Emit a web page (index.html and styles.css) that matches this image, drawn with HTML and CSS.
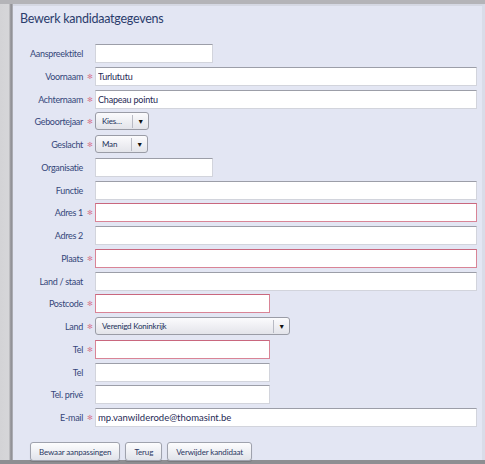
FILE: index.html
```html
<!DOCTYPE html>
<html>
<head>
<meta charset="utf-8">
<link rel="stylesheet" href="styles.css">
</head>
<body>
<div class="frame">
  <div class="side"></div>
  <div class="panel">
    <h1 class="title">Bewerk kandidaatgegevens</h1>
    <form class="form">
      <label class="lbl">Aanspreektitel</label><span class="star"></span><div class="field"><input class="inp w-s" type="text"></div>
      <label class="lbl">Voornaam</label><span class="star">✻</span><div class="field"><input class="inp w-l" type="text" value="Turlututu"></div>
      <label class="lbl">Achternaam</label><span class="star">✻</span><div class="field"><input class="inp w-l" type="text" value="Chapeau pointu"></div>
      <label class="lbl">Geboortejaar</label><span class="star">✻</span><div class="field"><div class="sel w-y"><span class="sel-txt">Kies…</span><span class="sel-btn">▼</span></div></div>
      <label class="lbl">Geslacht</label><span class="star">✻</span><div class="field"><div class="sel w-g"><span class="sel-txt">Man</span><span class="sel-btn">▼</span></div></div>
      <label class="lbl">Organisatie</label><span class="star"></span><div class="field"><input class="inp w-s" type="text"></div>
      <label class="lbl">Functie</label><span class="star"></span><div class="field"><input class="inp w-l" type="text"></div>
      <label class="lbl">Adres 1</label><span class="star">✻</span><div class="field"><input class="inp w-l err" type="text"></div>
      <label class="lbl">Adres 2</label><span class="star"></span><div class="field"><input class="inp w-l" type="text"></div>
      <label class="lbl">Plaats</label><span class="star">✻</span><div class="field"><input class="inp w-l err" type="text"></div>
      <label class="lbl">Land / staat</label><span class="star"></span><div class="field"><input class="inp w-l" type="text"></div>
      <label class="lbl">Postcode</label><span class="star">✻</span><div class="field"><input class="inp w-m err" type="text"></div>
      <label class="lbl">Land</label><span class="star">✻</span><div class="field"><div class="sel w-c"><span class="sel-txt">Verenigd Koninkrijk</span><span class="sel-btn">▼</span></div></div>
      <label class="lbl">Tel</label><span class="star">✻</span><div class="field"><input class="inp w-m err" type="text"></div>
      <label class="lbl">Tel</label><span class="star"></span><div class="field"><input class="inp w-m" type="text"></div>
      <label class="lbl">Tel. privé</label><span class="star"></span><div class="field"><input class="inp w-m" type="text"></div>
      <label class="lbl">E-mail</label><span class="star">✻</span><div class="field"><input class="inp w-l big" type="text" value="mp.vanwilderode@thomasint.be"></div>
    </form>
    <div class="actions">
      <button class="btn" type="button">Bewaar aanpassingen</button>
      <button class="btn" type="button">Terug</button>
      <button class="btn" type="button">Verwijder kandidaat</button>
    </div>
  </div>
</div>
</body>
</html>
```
FILE: styles.css
```css
* { box-sizing: border-box; }
html, body { margin: 0; padding: 0; }
body {
  width: 485px;
  height: 464px;
  overflow: hidden;
  background: #a9a9ad;
  font-family: Lato, "Open Sans", sans-serif;
}
.frame {
  display: flex;
  height: 464px;
  border-top: 4px solid #b4b4b8;
  border-bottom: 4px solid #8e8e92;
}
.side {
  width: 13px;
  flex: none;
  background: linear-gradient(to right, #d3d3d6 0, #d6d6d9 9px, #a2a2a6 10px, #8d8d92 12px, #c9cbd3 13px);
}
.panel {
  flex: 1;
  background: #e3e6f3;
  border-top: 2px solid #d5d8e3;
  padding: 4px 0 0 0;
  border-right: 3px solid #d9dce8;
}
.title {
  margin: 0 0 0 7px;
  font-size: 12.5px;
  font-weight: 400;
  color: #2b3c6c;
  letter-spacing: -0.25px;
  line-height: 18px;
}
.form {
  display: grid;
  grid-template-columns: 70px 12px 1fr;
  row-gap: 3.75px;
  margin-top: 16px;
  align-items: center;
}
.lbl {
  text-align: right;
  font-size: 9px;
  letter-spacing: -0.3px;
  color: #35467a;
  line-height: 19px;
  white-space: nowrap;
}
.star {
  color: #d77b92;
  font-size: 7px;
  text-align: center;
  line-height: 19px;
  padding-left: 1px;
}
.field { display: flex; height: 19px; }
.inp {
  height: 19px;
  border: 1px solid #d2d4dc;
  border-top: 1px solid #9c9ea8;
  background: #fff;
  font-family: inherit;
  font-size: 9px;
  letter-spacing: -0.2px;
  color: #1f2a55;
  padding: 0 2px;
  margin: 0;
  outline: none;
}
.inp.big { font-size: 9.5px; letter-spacing: 0; }
.inp.err {
  border: 1px solid #d98496;
  border-top-color: #c9677e;
}
.w-s { width: 118px; }
.w-m { width: 175px; }
.w-l { width: 382px; }
.w-y { width: 54px; }
.w-g { width: 53px; }
.w-c { width: 195px; }
.sel {
  display: flex;
  align-items: center;
  height: 18px;
  border: 1px solid #9a9ca6;
  border-radius: 3px;
  background: linear-gradient(#fbfbfd, #e3e4ea);
  font-size: 8px;
  letter-spacing: -0.2px;
  color: #22305a;
}
.sel-txt {
  flex: 1;
  padding-left: 6px;
  white-space: nowrap;
  overflow: hidden;
}
.sel-btn {
  width: 16px;
  height: 13px;
  border-left: 1px solid #b8bac4;
  font-size: 7px;
  line-height: 13px;
  text-align: center;
  color: #111;
}
.actions {
  display: flex;
  gap: 5px;
  margin: 15px 0 0 17px;
}
.btn {
  height: 19px;
  padding: 0 8px;
  border: 1px solid #9fa2ad;
  border-radius: 3px;
  background: linear-gradient(#fdfdfe, #e1e3ea);
  font-family: inherit;
  font-size: 8px;
  letter-spacing: -0.15px;
  color: #2b3862;
  box-shadow: 0 1px 1px rgba(0,0,0,0.15);
}
```
